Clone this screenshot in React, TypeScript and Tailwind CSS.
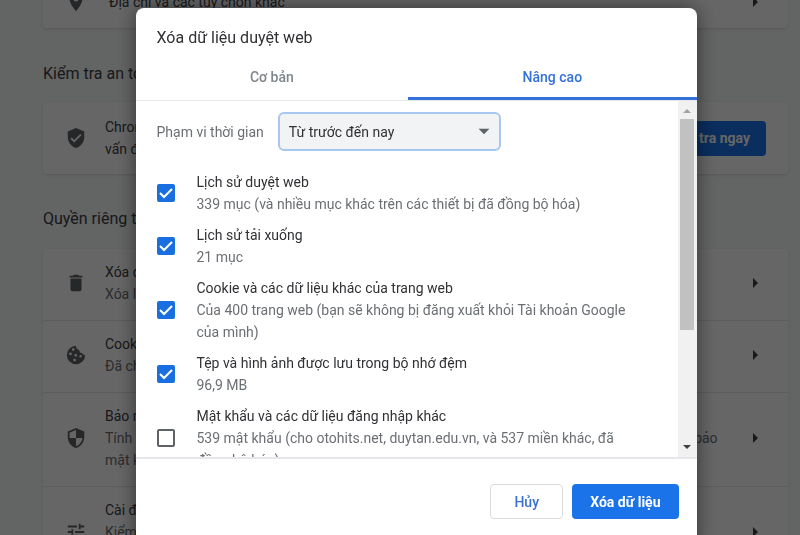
import { useState } from "react";
import type { ReactNode } from "react";
import {
  MdArrowDropDown,
  MdArrowRight,
  MdDelete,
  MdLocationOn,
  MdSecurity,
  MdTune,
  MdVerifiedUser,
} from "react-icons/md";

/* ================= ICONS ================= */

function CookieIcon() {
  return (
    <svg width="22" height="22" viewBox="0 0 24 24" fill="currentColor">
      <path
        fillRule="evenodd"
        d="M12 2a10 10 0 1 0 10 10c-1.700 0-2.900-.8-3.300-2.200-2 0-3.200-1.200-3-3.100C13.500 6.300 12 4.500 12 2z
          M9 4.600a1.500 1.500 0 1 1 0 3a1.500 1.500 0 1 1 0-3z
          M6 9.200a1.500 1.500 0 1 1 0 3a1.500 1.500 0 1 1 0-3z
          M11.700 10.800a1.500 1.500 0 1 1 0 3a1.500 1.500 0 1 1 0-3z
          M17 12a1.400 1.400 0 1 1 0 2.800a1.400 1.400 0 1 1 0-2.800z
          M10.500 16a1.500 1.500 0 1 1 0 3a1.500 1.500 0 1 1 0-3z"
      />
    </svg>
  );
}

/* ================= DATA ================= */

const DATA_TYPES = [
  {
    id: "history",
    title: "Lịch sử duyệt web",
    detail: "339 mục (và nhiều mục khác trên các thiết bị đã đồng bộ hóa)",
    checked: true,
  },
  {
    id: "downloads",
    title: "Lịch sử tải xuống",
    detail: "21 mục",
    checked: true,
  },
  {
    id: "cookies",
    title: "Cookie và các dữ liệu khác của trang web",
    detail:
      "Của 400 trang web (bạn sẽ không bị đăng xuất khỏi Tài khoản Google của mình)",
    checked: true,
  },
  {
    id: "cache",
    title: "Tệp và hình ảnh được lưu trong bộ nhớ đệm",
    detail: "96,9 MB",
    checked: true,
  },
  {
    id: "passwords",
    title: "Mật khẩu và các dữ liệu đăng nhập khác",
    detail:
      "539 mật khẩu (cho otohits.net, duytan.edu.vn, và 537 miền khác, đã đồng bộ hóa)",
    checked: false,
  },
];

const PRIVACY_ROWS = [
  {
    icon: <MdDelete size={22} />,
    title: "Xóa dữ liệu duyệt web",
    detail: "Xóa lịch sử, cookie, bộ nhớ đệm và các dữ liệu khác",
  },
  {
    icon: <CookieIcon />,
    title: "Cookie và dữ liệu khác của trang web",
    detail: "Đã chặn cookie của bên thứ ba ở chế độ Ẩn danh",
  },
  {
    icon: <MdSecurity size={22} />,
    title: "Bảo mật",
    detail:
      "Tính năng Duyệt web an toàn (bảo vệ khỏi các trang web nguy hiểm) và những tùy chọn cài đặt bảo mật khác",
  },
  {
    icon: <MdTune size={22} />,
    title: "Cài đặt trang web",
    detail:
      "Kiểm soát thông tin mà các trang web có thể dùng và hiển thị (vị trí, máy ảnh, cửa sổ bật lên và những mục khác)",
  },
];

/* ================= SETTINGS PAGE ================= */

function SettingsRow({
  icon,
  title,
  detail,
}: {
  icon: ReactNode;
  title: string;
  detail: string;
}) {
  return (
    <a
      href="#"
      className="flex items-center pl-[22px] pr-[21px] pt-3 pb-[15px] border-b border-gray-200"
    >
      <span className="shrink-0 text-[#5f6368]">{icon}</span>
      <span className="flex-1 pl-[18px] pr-5">
        <span className="block text-[#3c4043]">{title}</span>
        <span className="block text-[#6b6f74]">{detail}</span>
      </span>
      <MdArrowRight size={24} className="shrink-0 text-[#3c4043]" />
    </a>
  );
}

function SettingsPage() {
  return (
    <main className="h-full overflow-hidden bg-[#f8f9fa] pl-[43px] pr-3 text-sm leading-[22px] text-[#3c4043]">
      <section className="h-7 rounded-b bg-white shadow flex items-end">
        <a href="#" className="flex w-full items-center pl-[22px] pr-[21px] pb-3.5">
          <MdLocationOn size={22} className="shrink-0 text-[#5f6368]" />
          <span className="flex-1 pl-[22px]">Địa chỉ và các tùy chọn khác</span>
          <MdArrowRight size={24} className="shrink-0 text-[#3c4043]" />
        </a>
      </section>

      <h2 className="mt-[35px] text-base leading-[22px]">Kiểm tra an toàn</h2>
      <section className="mt-[17px] flex items-center rounded bg-white py-3.5 pl-[22px] pr-[22px] shadow">
        <MdVerifiedUser size={22} className="shrink-0 text-[#5f6368]" />
        <p className="flex-1 pl-[18px] pr-6">
          Chrome có thể giúp bảo vệ bạn khỏi các sự cố rò rỉ dữ liệu, tiện ích
          độc hại và nhiều vấn đề khác
        </p>
        <button className="h-[35px] rounded bg-[#1a73e8] px-4 font-bold text-white">
          Kiểm tra ngay
        </button>
      </section>

      <h2 className="mt-[34px] text-base leading-[22px]">
        Quyền riêng tư và bảo mật
      </h2>
      <section className="mt-[19px] rounded bg-white shadow">
        {PRIVACY_ROWS.map((row) => (
          <SettingsRow key={row.title} {...row} />
        ))}
      </section>
    </main>
  );
}

/* ================= DIALOG ================= */

function ScrollBar() {
  return (
    <div className="flex w-[19px] shrink-0 flex-col items-center bg-[#f1f1f1]">
      <svg viewBox="0 0 19 18" className="h-[18px] w-full shrink-0">
        <path d="M5 12l4-4 4 4z" fill="#a3a3a3" />
      </svg>
      <div className="flex w-full flex-1 flex-col items-center">
        <div className="h-[66%] w-3.5 bg-[#c1c1c1]" />
      </div>
      <svg viewBox="0 0 19 18" className="h-[18px] w-full shrink-0">
        <path d="M5 6l4 4 4-4z" fill="#404040" />
      </svg>
    </div>
  );
}

function ClearDataDialog() {
  const [tab, setTab] = useState<"basic" | "advanced">("advanced");
  const [selected, setSelected] = useState(
    DATA_TYPES.filter((d) => d.checked).map((d) => d.id)
  );

  function toggle(id: string) {
    setSelected((prev) =>
      prev.includes(id) ? prev.filter((x) => x !== id) : [...prev, id]
    );
  }

  const tabClass = (active: boolean) =>
    active
      ? "flex-auto h-[46px] pt-[3px] border-b-[3px] border-[#3372d8] font-medium text-[#3372d8]"
      : "flex-auto h-[46px] pt-[3px] border-b-[3px] border-transparent font-medium text-[#80868b]";

  return (
    <div
      role="dialog"
      aria-labelledby="dialog-title"
      className="w-full max-w-[561px] shrink-0 self-start overflow-hidden rounded-lg bg-white text-sm leading-[22px] shadow-[0_0_20px_rgba(0,0,0,0.5)]"
    >
      {/* HEADER */}
      <h1
        id="dialog-title"
        className="px-[21px] pt-5 pb-1.5 text-base leading-5 text-[#303134]"
      >
        Xóa dữ liệu duyệt web
      </h1>
      <div role="tablist" className="flex border-b border-gray-200">
        <button
          role="tab"
          aria-selected={tab === "basic"}
          onClick={() => setTab("basic")}
          className={tabClass(tab === "basic")}
        >
          Cơ bản
        </button>
        <button
          role="tab"
          aria-selected={tab === "advanced"}
          onClick={() => setTab("advanced")}
          className={tabClass(tab === "advanced")}
        >
          Nâng cao
        </button>
      </div>

      {/* BODY */}
      <div className="flex h-[358px] border-b-2 border-gray-200">
        <div className="flex-1 overflow-hidden pl-[21px] pr-9 pt-[11px]">
          <div className="flex items-center gap-3.5">
            <label htmlFor="range" className="text-[#6b6f74]">
              Phạm vi thời gian
            </label>
            <div className="relative w-[223px]">
              <select
                id="range"
                className="h-[39px] w-full appearance-none rounded-md border-2 border-[#a8c7f0] bg-[#f1f3f4] pl-[9px] pr-8 text-[#303134]"
              >
                <option>Từ trước đến nay</option>
                <option>Giờ vừa qua</option>
                <option>24 giờ qua</option>
              </select>
              <MdArrowDropDown
                size={26}
                className="pointer-events-none absolute right-1 top-1.5 text-[#5f6368]"
              />
            </div>
          </div>

          <ul className="mt-5 flex flex-col gap-[9px]">
            {DATA_TYPES.map((item) => (
              <li key={item.id}>
                <label className="flex items-center gap-[22px]">
                  <span className="relative size-[18px] shrink-0">
                    <input
                      type="checkbox"
                      checked={selected.includes(item.id)}
                      onChange={() => toggle(item.id)}
                      className="peer block size-[18px] appearance-none rounded-xs border-2 border-[#5f6368] checked:border-[#1a6fe0] checked:bg-[#1a6fe0]"
                    />
                    <svg
                      viewBox="0 0 18 18"
                      className="pointer-events-none absolute inset-0 hidden peer-checked:block"
                    >
                      <path
                        d="M3 9l4 4 8-8"
                        fill="none"
                        stroke="white"
                        strokeWidth="2"
                      />
                    </svg>
                  </span>
                  <span>
                    <span className="block text-[#303134]">{item.title}</span>
                    <span className="block text-[#6b6f74]">{item.detail}</span>
                  </span>
                </label>
              </li>
            ))}
          </ul>
        </div>
        <ScrollBar />
      </div>

      {/* FOOTER */}
      <div className="flex justify-end gap-[9px] pt-[25px] pb-8 pr-[18px]">
        <button className="h-[35px] w-[73px] rounded border border-[#dadce0] font-medium text-[#3b70d1]">
          Hủy
        </button>
        <button className="h-[35px] rounded bg-[#1a73e8] px-[18px] font-bold text-white">
          Xóa dữ liệu
        </button>
      </div>
    </div>
  );
}

export default function App() {
  return (
    <div className="relative h-screen overflow-hidden font-['Roboto','Liberation_Sans',sans-serif]">
      <SettingsPage />
      <div className="fixed inset-0 flex justify-center overflow-hidden bg-black/60 pl-8 pt-2">
        <ClearDataDialog />
      </div>
    </div>
  );
}
